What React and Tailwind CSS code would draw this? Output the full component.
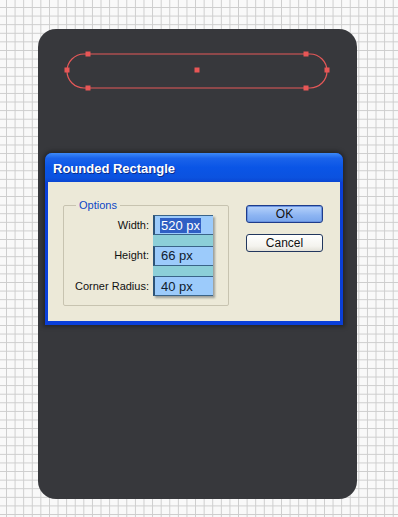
import React from "react";

const anchors = [
  [50, 25],
  [268, 25],
  [29, 41],
  [289, 41],
  [50, 59],
  [268, 59],
  [159, 41],
];

function PillOutline() {
  return (
    <svg width="319" height="95" className="block">
      <rect x="29" y="25" width="260" height="34" rx="17" fill="none" stroke="#e55858" strokeWidth="1.2" />
      {anchors.map(([x, y], i) => (
        <rect key={i} x={x - 2.5} y={y - 2.5} width="5" height="5" fill="#e85656" />
      ))}
    </svg>
  );
}

function Field({ value, selected }) {
  return (
    <div className="h-[20px] w-[60px] bg-[#9ccbfb] border-l-2 border-t border-b border-l-[#2d5478] border-t-[#3a6488] border-b-[#3a6488] flex items-center pl-[5px] text-[13px] text-[#10202e]">
      {selected ? (
        <span className="bg-[#2f5fc4] text-white leading-[15px] px-[1px]">{value}</span>
      ) : (
        <span className="leading-[15px] px-[1px]">{value}</span>
      )}
    </div>
  );
}

function OptionsDialog() {
  return (
    <div
      className="ml-[7px] mt-[29px] w-[298px] rounded-t-[7px] bg-[#0a3fd8] pb-[4px] shadow-[0_0_4px_2px_rgba(0,0,0,0.35)]"
      style={{ fontFamily: '"Liberation Sans", Arial, sans-serif' }}
    >
      <div className="h-[29px] rounded-t-[7px] bg-[linear-gradient(to_bottom,#3d8af7_0%,#1a63ea_18%,#0a55e6_50%,#0b52df_85%,#0a46d2_100%)] flex items-center pl-[8px] pt-[2px]">
        <span className="text-white font-bold text-[13px] [text-shadow:1px_1px_0_#0a2c8a]">Rounded Rectangle</span>
      </div>
      <div className="mx-[3px] h-[139px] bg-[#ece9d8] flex items-start">
        <fieldset className="ml-[15px] mt-[17px] w-[166px] h-[107px] border border-[#c7c3b0] rounded-[2px] px-0">
          <legend className="ml-[12px] px-[3px] text-[11px] text-[#0d47c6] leading-[12px]">Options</legend>
          <div className="flex mt-[4px]">
            <div className="w-[86px] flex flex-col gap-[10.5px] items-end pr-[1px] text-[11px] text-[#111]">
              <div className="h-[20px] flex items-center">Width:</div>
              <div className="h-[20px] flex items-center">Height:</div>
              <div className="h-[20px] flex items-center">Corner Radius:</div>
            </div>
            <div className="ml-[3px] w-[60px] bg-[#8ccfd8] flex flex-col gap-[10.5px] shadow-[2px_2px_2px_rgba(60,70,80,0.45)]">
              <Field value="520 px" selected />
              <Field value="66 px" />
              <Field value="40 px" />
            </div>
          </div>
        </fieldset>
        <div className="ml-[17px] mt-[23px] flex flex-col gap-[11px]">
          <button className="w-[77px] h-[18px] rounded-[3px] border border-[#1f3c8a] bg-[linear-gradient(to_bottom,#b6d2fb,#8cb4f2_60%,#7aa6ec)] shadow-[inset_0_0_0_1px_#6a93e0] text-[12px] text-[#111] leading-none">
            OK
          </button>
          <button className="w-[77px] h-[18px] rounded-[3px] border border-[#22375e] bg-[linear-gradient(to_bottom,#ffffff,#f4f3ee_70%,#e3e1d8)] text-[12px] text-[#111] leading-none">
            Cancel
          </button>
        </div>
      </div>
    </div>
  );
}

export default function App() {
  return (
    <div className="w-[398px] h-[517px] overflow-hidden bg-[#f9f9f9] bg-[linear-gradient(to_right,#cdcdcd_1px,transparent_1px),linear-gradient(to_bottom,#cdcdcd_1px,transparent_1px)] bg-[size:8.6px_8.6px] bg-[position:6px_7px] pt-[29px] pl-[38px]">
      <div className="w-[319px] h-[470px] rounded-[18px] bg-[#37383c] overflow-hidden">
        <PillOutline />
        <OptionsDialog />
      </div>
    </div>
  );
}
